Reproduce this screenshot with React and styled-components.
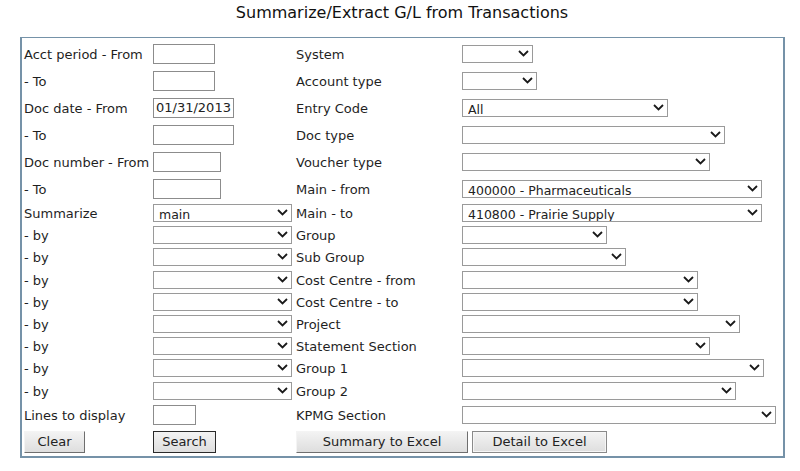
import React from 'react';
import styled, { createGlobalStyle } from 'styled-components';

const GlobalStyle = createGlobalStyle`
  html, body {
    margin: 0;
    padding: 0;
    background: #ffffff;
  }
  body {
    font-family: "DejaVu Sans", Verdana, sans-serif;
    color: #1f1f1f;
  }
`;

const Page = styled.div`
  width: 800px;
  height: 471px;
  overflow: hidden;
`;

const Title = styled.h1`
  margin: 0;
  padding: 3px 0 0 4px;
  height: 37px;
  box-sizing: border-box;
  text-align: center;
  font-size: 16px;
  font-weight: normal;
  color: #111;
`;

const Panel = styled.div`
  margin-left: 20px;
  width: 765px;
  height: 421px;
  box-sizing: border-box;
  border: 2px solid #7592a8;
  border-top-width: 1px;
  padding: 2px 0 0 2px;
`;

const FormGrid = styled.div`
  display: grid;
  grid-template-columns: 129px 143px 166px 1fr;
  grid-template-rows: repeat(6, 27px) repeat(9, 22.2px) 26px 28px;
  align-items: center;
`;

const Label = styled.div`
  font-size: 13px;
  white-space: nowrap;
  line-height: 15px;
  padding-top: 1px;
`;

const Cell = styled.div`
  display: flex;
  align-items: center;
`;

const TextBox = styled.input`
  width: ${p => p.$w}px;
  height: 20px;
  box-sizing: border-box;
  border: 1px solid #8c8c8c;
  padding: 0 2px;
  font-family: inherit;
  font-size: 13px;
  color: #222;
  background: #fff;
  outline: none;
`;

const SelectWrap = styled.div`
  position: relative;
  width: ${p => p.$w}px;
  height: 18px;
`;

const NativeSelect = styled.select`
  appearance: none;
  -webkit-appearance: none;
  width: 100%;
  height: 100%;
  box-sizing: border-box;
  border: 1px solid #9a9a9a;
  border-radius: 0;
  background: #fff;
  padding: 2px 16px 0 5px;
  font-family: inherit;
  font-size: 12.5px;
  color: #222;
  outline: none;
`;

const Chevron = styled.svg`
  position: absolute;
  right: 4px;
  top: 5px;
  pointer-events: none;
`;

const Select = ({ w, value }) => (
  <SelectWrap $w={w}>
    <NativeSelect defaultValue={value || ''}>
      <option value={value || ''}>{value || ''}</option>
    </NativeSelect>
    <Chevron width="11" height="7" viewBox="0 0 11 7">
      <polyline points="1,1 5.5,5.5 10,1" fill="none" stroke="#1a1a1a" strokeWidth="1.8" />
    </Chevron>
  </SelectWrap>
);

const ButtonGroup = styled.div`
  grid-column: 3 / span 2;
  display: flex;
  gap: 4px;
`;

const Button = styled.button`
  width: ${p => p.$w}px;
  height: 22px;
  box-sizing: border-box;
  font-family: inherit;
  font-size: 13px;
  color: #222;
  padding: 0;
  background: linear-gradient(#f3f3f3, #dedede);
  border: 1px solid;
  border-color: ${p =>
    p.$variant === 'default'
      ? '#2a2a2a'
      : p.$variant === 'outline'
      ? '#8a8a8a'
      : '#f4f4f4 #6e6e6e #6e6e6e #f4f4f4'};
  box-shadow: ${p => (p.$variant === 'outline' ? 'inset 0 0 0 1px #f6f6f6' : 'none')};
`;

const fields = [
  { label: 'Acct period - From', input: 62, right: 'System', sel: 71 },
  { label: '- To', input: 62, right: 'Account type', sel: 75 },
  { label: 'Doc date - From', input: 81, value: '01/31/2013', right: 'Entry Code', sel: 206, selValue: 'All' },
  { label: '- To', input: 81, right: 'Doc type', sel: 263 },
  { label: 'Doc number - From', input: 68, right: 'Voucher type', sel: 248 },
  { label: '- To', input: 68, right: 'Main - from', sel: 300, selValue: '400000 - Pharmaceuticals' },
  { label: 'Summarize', pick: 'main', right: 'Main - to', sel: 300, selValue: '410800 - Prairie Supply' },
  { label: '- by', pick: '', right: 'Group', sel: 145 },
  { label: '- by', pick: '', right: 'Sub Group', sel: 164 },
  { label: '- by', pick: '', right: 'Cost Centre - from', sel: 236 },
  { label: '- by', pick: '', right: 'Cost Centre - to', sel: 236 },
  { label: '- by', pick: '', right: 'Project', sel: 278 },
  { label: '- by', pick: '', right: 'Statement Section', sel: 248 },
  { label: '- by', pick: '', right: 'Group 1', sel: 302 },
  { label: '- by', pick: '', right: 'Group 2', sel: 274 },
  { label: 'Lines to display', input: 43, right: 'KPMG Section', sel: 314 },
];

export default function App() {
  return (
    <Page>
      <GlobalStyle />
      <Title>Summarize/Extract G/L from Transactions</Title>
      <Panel>
        <FormGrid>
          {fields.map((f, i) => (
            <React.Fragment key={i}>
              <Label>{f.label}</Label>
              <Cell>
                {f.input ? (
                  <TextBox $w={f.input} defaultValue={f.value || ''} />
                ) : (
                  <Select w={139} value={f.pick} />
                )}
              </Cell>
              <Label>{f.right}</Label>
              <Cell>
                <Select w={f.sel} value={f.selValue} />
              </Cell>
            </React.Fragment>
          ))}
          <Cell>
            <Button $w={61}>Clear</Button>
          </Cell>
          <Cell>
            <Button $w={63} $variant="default">Search</Button>
          </Cell>
          <ButtonGroup>
            <Button $w={172}>Summary to Excel</Button>
            <Button $w={135} $variant="outline">Detail to Excel</Button>
          </ButtonGroup>
        </FormGrid>
      </Panel>
    </Page>
  );
}
